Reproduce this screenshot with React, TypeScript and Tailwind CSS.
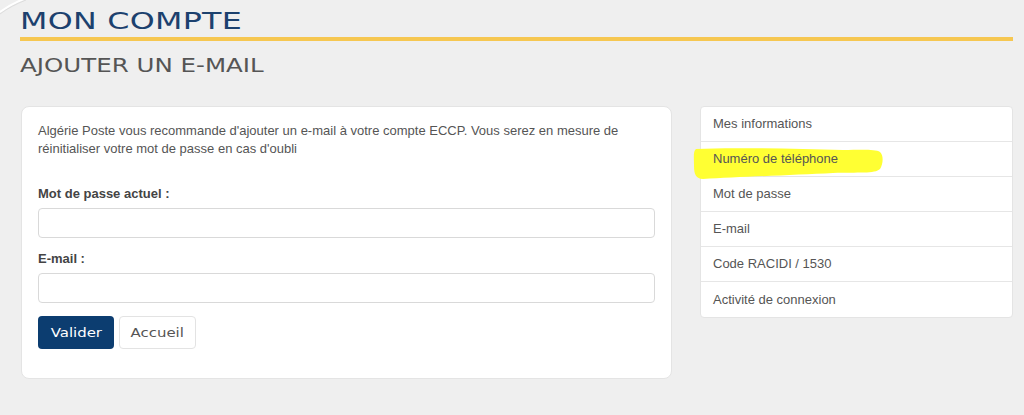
import React from "react";

const menuItems = [
  "Mes informations",
  "Numéro de téléphone",
  "Mot de passe",
  "E-mail",
  "Code RACIDI / 1530",
  "Activité de connexion",
];

const wide = { fontFamily: '"DejaVu Sans", sans-serif' };
const body = { fontFamily: '"Liberation Sans", Arial, sans-serif' };

function Highlight() {
  // yellow marker stroke drawn over the phone entry
  return (
    <svg
      className="pointer-events-none absolute left-[-8px] top-[4px]"
      width="192"
      height="34"
      viewBox="0 0 192 34"
      aria-hidden="true"
    >
      <path
        d="M3 3 C40 1 100 3 150 4 C168 4 182 3 187 6 C191 10 190 18 187 23 C182 28 165 26 140 27 C100 29 45 31 10 33 C3 33 1 28 1 20 C1 12 0 5 3 3 Z"
        fill="#ffff33"
      />
    </svg>
  );
}

export default function App() {
  return (
    <div className="relative h-[415px] w-[1024px] overflow-hidden bg-[#efefef] pl-[20px] pr-[11px]" style={body}>
      <svg className="absolute left-0 top-0" width="40" height="20" viewBox="0 0 40 20" aria-hidden="true">
        <path d="M0 12 C8 6 16 2 26 -2" stroke="#ffffff" strokeWidth="2" fill="none" />
        <path d="M0 14 C8 8 16 4 26 0" stroke="#dcdcdc" strokeWidth="1" fill="none" />
      </svg>

      <div className="pt-[8px]">
        <h1
          className="origin-left scale-x-[1.38] text-[23px] font-normal leading-[27px] tracking-[0.2px] text-[#1c416e]"
          style={wide}
        >
          MON COMPTE
        </h1>
      </div>
      <div className="mt-[2px] h-[4px] w-full bg-[#f6c751]" />
      <h2
        className="mt-[13px] origin-left scale-x-[1.29] text-[19px] font-normal leading-[22px] text-[#555555]"
        style={wide}
      >
        AJOUTER UN E-MAIL
      </h2>

      <div className="mt-[30px] flex items-start">
        <div className="ml-px w-[651px] rounded-lg border border-[#e4e4e4] bg-white px-4 pb-[29px] pt-[15px]">
          <p className="text-[13px] leading-[18px] text-[#555555]">
            Algérie Poste vous recommande d'ajouter un e-mail à votre compte ECCP. Vous serez en mesure de
            <br />
            réinitialiser votre mot de passe en cas d'oubli
          </p>

          <label className="mt-[27px] block text-[13px] font-bold leading-[18px] text-[#444444]">
            Mot de passe actuel :
          </label>
          <input
            type="password"
            className="mt-[5px] block h-[30px] w-full rounded border border-[#d9d9d9] bg-white px-2 outline-none"
          />

          <label className="mt-[12px] block text-[13px] font-bold leading-[18px] text-[#444444]">
            E-mail :
          </label>
          <input
            type="email"
            className="mt-[5px] block h-[30px] w-full rounded border border-[#d9d9d9] bg-white px-2 outline-none"
          />

          <div className="mt-[13px] flex gap-[5px]">
            <button
              className="h-[33px] w-[76px] rounded bg-[#0c3d70] text-[13px] text-white"
              style={wide}
            >
              <span className="inline-block scale-x-[1.15]">Valider</span>
            </button>
            <button
              className="h-[33px] w-[77px] rounded border border-[#e3e3e3] bg-white text-[13px] text-[#555555]"
              style={wide}
            >
              <span className="inline-block scale-x-[1.15]">Accueil</span>
            </button>
          </div>
        </div>

        <ul className="ml-auto w-[313px] rounded border border-[#e4e4e4] bg-white">
          {menuItems.map((item, i) => (
            <li
              key={item}
              className={
                "relative flex h-[35px] items-center px-3 text-[13px] text-[#555555] " +
                (i < menuItems.length - 1 ? "border-b border-[#e6e6e6]" : "")
              }
            >
              {i === 1 && <Highlight />}
              <span className="relative">{item}</span>
            </li>
          ))}
        </ul>
      </div>
    </div>
  );
}
